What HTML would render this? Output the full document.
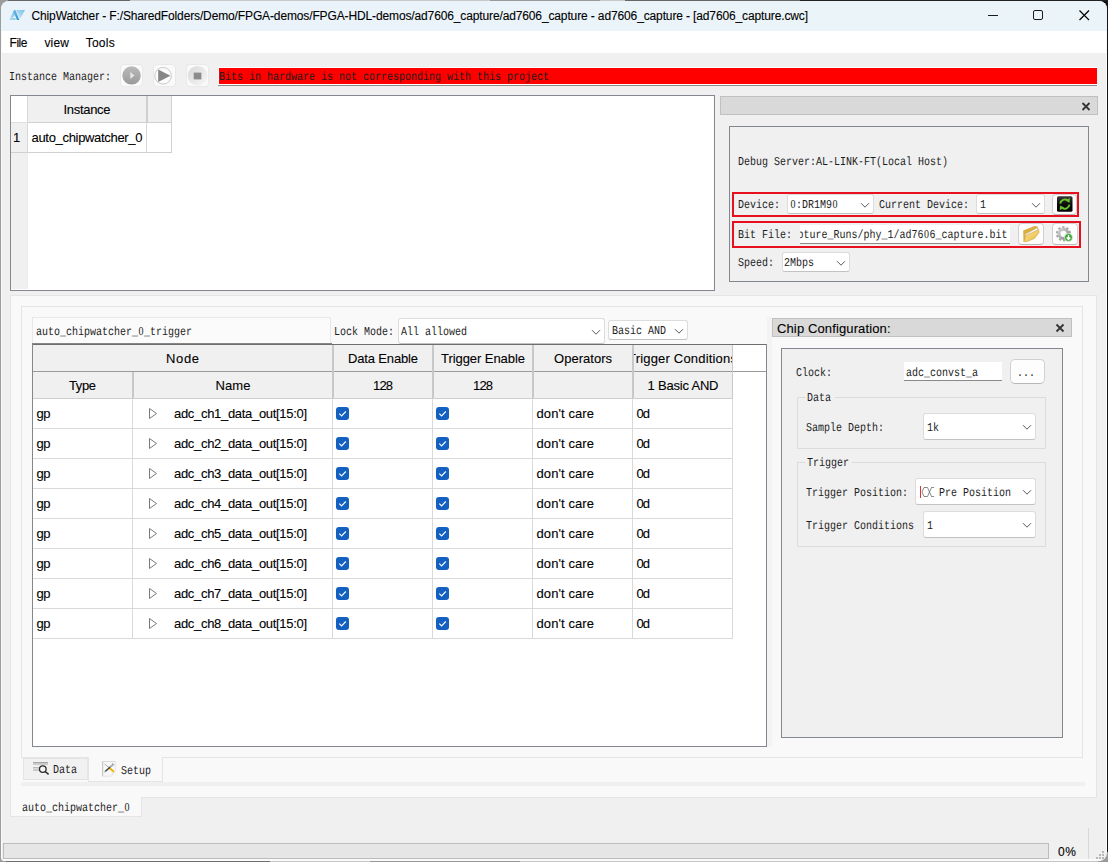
<!DOCTYPE html>
<html lang="en"><head><meta charset="utf-8"><title>ChipWatcher</title><style>
html,body{margin:0;padding:0}
body{width:1108px;height:862px;overflow:hidden;position:relative;background:#f0f0f0;color:#000}
body div,body span,body svg{position:absolute}
.m{font:12px/14px "Liberation Mono",monospace;white-space:pre;transform:scaleX(.83333);transform-origin:0 0;text-rendering:geometricPrecision;color:#1c1c1c}
.m span{position:static}
.m i{font:normal 12px/10px "Liberation Serif",serif;display:inline-block;width:7.2px;text-align:center;text-indent:0}
.s12{font:12px/14px "Liberation Sans",sans-serif;white-space:pre;color:#000;-webkit-text-stroke:.1px #000}
.s13{font:13px/16px "Liberation Sans",sans-serif;white-space:pre;color:#000;-webkit-text-stroke:.1px #000}
</style></head>
<body>
<div style="left:0px;top:0px;width:1108px;height:862px;background:#9c9c9c;"></div>
<div style="left:1098px;top:0px;width:10px;height:12px;background:#111;"></div>
<div style="left:1107px;top:0px;width:1px;height:852px;background:#151515;"></div>
<div style="left:0px;top:0px;width:1108px;height:1px;background:linear-gradient(90deg,#9a9a9a 0 8px,#666 8px 130px,#c8c8c8 130px 490px,#999 490px 600px,#c8c8c8 600px 625px,#666 625px 800px,#222 800px);"></div>
<div style="left:0px;top:861px;width:1108px;height:1px;background:linear-gradient(90deg,#999 0 6px,#707070 6px 270px,#c6c6c6 270px 370px,#9a9a9a 370px 520px,#c6c6c6 520px 1098px,#999 1098px);"></div>
<div style="left:1px;top:1px;width:1106px;height:860px;background:#f0f0f0;border-radius:8px 8px 8px 3px;"></div>
<div style="left:1px;top:1px;width:1106px;height:30px;border-radius:8px 8px 0 0;background:linear-gradient(90deg,#eaf3fa,#ebf4f8);"></div>
<div style="left:1px;top:31px;width:1106px;height:22px;background:#fff;"></div>
<svg style="left:8px;top:9px" width="18" height="12" viewBox="0 0 18 12"><defs><linearGradient id="ia" x1="0" y1="1" x2="1" y2="0"><stop offset="0" stop-color="#b9def4"/><stop offset="1" stop-color="#6db7e6"/></linearGradient><linearGradient id="ib" x1="0" y1="0" x2="0" y2="1"><stop offset="0" stop-color="#6db7e6"/><stop offset="1" stop-color="#2c97d5"/></linearGradient><linearGradient id="ic" x1="0" y1="1" x2="1" y2="0"><stop offset="0" stop-color="#d3eaf7"/><stop offset="1" stop-color="#77c0ea"/></linearGradient></defs><path d="M1.3 11.1 L6 .9 L6.9 .9 L6.4 6.9 L4.1 9.1 L7.2 9.1 L7.9 11.1 Z" fill="url(#ia)"/><path d="M6 .9 L7.4 .9 L11.3 11.1 L9 11.1 L5.6 3 Z" fill="url(#ib)"/><path d="M8 .9 L17 .9 L12.3 9.6 L11.5 9.6 Z" fill="url(#ic)"/></svg>
<span class="s12" style="left:31.50px;top:9px;letter-spacing:-0.129px;">ChipWatcher - F:/SharedFolders/Demo/FPGA-demos/FPGA-HDL-demos/ad7606_capture/ad7606_capture - ad7606_capture - [ad7606_capture.cwc]</span>
<svg style="left:980px;top:5px" width="120" height="22" viewBox="0 0 120 22"><g fill="none" stroke="#1a1a1a" stroke-width="1"><path d="M8 10.5 H18"/><rect x="53.5" y="5.5" width="9" height="9" rx="1.5"/><path d="M99.5 5.5 L109 15 M109 5.5 L99.5 15" stroke-width="1.15" stroke="#000"/></g></svg>
<span class="s12" style="left:9.50px;top:36px;letter-spacing:-0.445px;">File</span>
<span class="s12" style="left:44.40px;top:36px;letter-spacing:0.165px;">view</span>
<span class="s12" style="left:85.70px;top:36px;letter-spacing:0.247px;">Tools</span>
<span class="m" style="left:9px;top:70px;">Instance Manager:</span>
<div style="left:120px;top:64px;width:23px;height:23px;background:#fafafa;border:1px solid #e9e9e9;border-radius:4px;box-sizing:border-box;"></div>
<div style="left:153px;top:64px;width:23px;height:23px;background:#fafafa;border:1px solid #e9e9e9;border-radius:4px;box-sizing:border-box;"></div>
<div style="left:186px;top:64px;width:23px;height:23px;background:#fafafa;border:1px solid #e9e9e9;border-radius:4px;box-sizing:border-box;"></div>
<svg style="left:120.5px;top:64.7px" width="21" height="21" viewBox="0 0 21 21"><defs><linearGradient id="g1" x1="0" y1="0" x2="0" y2="1"><stop offset="0" stop-color="#bababa"/><stop offset="1" stop-color="#9a9a9a"/></linearGradient></defs><circle cx="10.55" cy="10.4" r="9.2" fill="url(#g1)"/><path d="M9.3 7 L13.5 10.55 L9.3 14.1 Z" fill="#e6e6e6"/></svg>
<svg style="left:153px;top:65.2px" width="21" height="21" viewBox="0 0 21 21"><circle cx="10.05" cy="10.8" r="8.3" fill="#fbfbfb" stroke="#a8a8a8" stroke-width=".6"/><path d="M5.2 4.5 L17.4 10.8 L5.2 16.9 Z" fill="#868686"/></svg>
<svg style="left:186.5px;top:65px" width="21" height="21" viewBox="0 0 21 21"><defs><linearGradient id="g3" x1="0" y1="0" x2="1" y2="1"><stop offset="0" stop-color="#d8d8d8"/><stop offset="1" stop-color="#f8f8f8"/></linearGradient></defs><circle cx="10.6" cy="10.8" r="9.9" fill="url(#g3)"/><rect x="6.7" y="7.6" width="7.7" height="6.8" fill="#8c8c8c"/></svg>
<div style="left:218px;top:67px;width:879px;height:19px;background:#fff;"></div>
<div style="left:219px;top:68px;width:878px;height:16px;background:#fe0000;"></div>
<div style="left:218px;top:85px;width:879px;height:1px;background:#8a8a8a;"></div>
<span class="m" style="left:219px;top:70px;">Bits in hardware is not corresponding with this project</span>
<div style="left:10px;top:95px;width:705px;height:196px;background:#fff;border:1px solid #828790;box-sizing:border-box;"></div>
<div style="left:11px;top:123px;width:17px;height:166px;background:#f0f0f0;"></div>
<div style="left:28px;top:96px;width:144px;height:27px;background:#f0f0f0;"></div>
<div style="left:27px;top:96px;width:1px;height:27px;background:#d8d8d8;"></div>
<div style="left:146px;top:96px;width:2px;height:27px;background:#d0d0d0;"></div>
<div style="left:171px;top:96px;width:1px;height:57px;background:#d0d0d0;"></div>
<div style="left:28px;top:122px;width:144px;height:1px;background:#d0d0d0;"></div>
<div style="left:11px;top:152px;width:161px;height:1px;background:#d0d0d0;"></div>
<div style="left:146px;top:123px;width:1px;height:30px;background:#d8d8d8;"></div>
<div style="left:27px;top:123px;width:1px;height:30px;background:#d8d8d8;"></div>
<div style="left:27px;top:153px;width:1px;height:136px;background:#ececec;"></div>
<div style="left:11px;top:122px;width:17px;height:1px;background:#e0e0e0;"></div>
<span class="s13" style="left:63.50px;top:102px;letter-spacing:-0.306px;">Instance</span>
<span class="s13" style="left:13.00px;top:130px;">1</span>
<span class="s13" style="left:31.50px;top:130px;letter-spacing:-0.315px;">auto_chipwatcher_0</span>
<div style="left:720px;top:96px;width:378px;height:19px;background:#d9d9d9;border:1px solid #c0c0c0;box-sizing:border-box;"></div>
<svg style="left:1081px;top:102px" width="10" height="9" viewBox="0 0 10 9"><path d="M1.5 1 L8.5 8 M8.5 1 L1.5 8" stroke="#333" stroke-width="1.8" fill="none"/></svg>
<div style="left:729px;top:126px;width:360px;height:156px;border:1px solid #828790;box-sizing:border-box;"></div>
<span class="m" style="left:738px;top:155px;">Debug Server:AL-LINK-FT(Local Host)</span>
<div style="left:732px;top:192px;width:347px;height:25px;border:2px solid #e8101e;box-sizing:border-box;"></div>
<div style="left:732px;top:221px;width:349px;height:27px;border:2px solid #e8101e;box-sizing:border-box;"></div>
<span class="m" style="left:738px;top:198px;">Device:</span>
<div style="left:787px;top:194px;width:87px;height:20px;background:#fff;border:1px solid #dcdcdc;border-radius:3px;box-sizing:border-box;border-bottom-color:#c2c2c2;"></div>
<svg style="left:860px;top:202px" width="10" height="7" viewBox="0 0 10 7"><path d="M1 1.2 L5 5.2 L9 1.2" fill="none" stroke="#5a5a5a" stroke-width="1"/></svg>
<span class="m" style="left:790px;top:198px;"><i>0</i>:DR1M9<i>0</i></span>
<span class="m" style="left:879px;top:198px;">Current Device:</span>
<div style="left:976px;top:194px;width:69px;height:20px;background:#fff;border:1px solid #dcdcdc;border-radius:3px;box-sizing:border-box;border-bottom-color:#c2c2c2;"></div>
<svg style="left:1031px;top:202px" width="10" height="7" viewBox="0 0 10 7"><path d="M1 1.2 L5 5.2 L9 1.2" fill="none" stroke="#5a5a5a" stroke-width="1"/></svg>
<span class="m" style="left:980px;top:198px;">1</span>
<div style="left:1052px;top:194px;width:25px;height:21px;background:#fdfdfd;border:1px solid #d0d0d0;border-radius:4px;box-sizing:border-box;border-bottom-color:#b8b8b8;"></div>
<svg style="left:1056px;top:196px" width="17" height="17" viewBox="0 0 17 17"><defs><linearGradient id="rk" x1="0" y1="0" x2="0" y2="1"><stop offset="0" stop-color="#3a3a3a"/><stop offset=".5" stop-color="#0c0c0c"/><stop offset="1" stop-color="#000"/></linearGradient></defs><rect x="1" y=".3" width="15.5" height="15.5" rx="1.5" fill="url(#rk)"/><g fill="none" stroke="#66c22e" stroke-width="1.9"><path d="M4.2 7.6 A4.7 4.7 0 0 1 11.6 4.3"/><path d="M13.4 8.6 A4.7 4.7 0 0 1 6 11.9"/></g><path d="M13.9 1.9 L13.5 6.7 L9.4 4.6 Z M3.7 14.3 L4.1 9.5 L8.2 11.6 Z" fill="#66c22e"/></svg>
<span class="m" style="left:738px;top:228px;">Bit File:</span>
<div style="left:800px;top:225px;width:210px;height:19px;background:#fff;box-sizing:border-box;border-bottom:1px solid #8a8a8a;"></div>
<span class="m" style="left:800px;top:228px;"><span style="display:inline-block;width:252px;overflow:hidden;text-indent:-3.6px;vertical-align:top">pture_Runs/phy_1/ad76<i>0</i>6_capture.bit</span></span>
<div style="left:1018px;top:223px;width:26px;height:22px;background:#fdfdfd;border:1px solid #d0d0d0;border-radius:4px;box-sizing:border-box;border-bottom-color:#b8b8b8;"></div>
<div style="left:1052px;top:223px;width:26px;height:22px;background:#fdfdfd;border:1px solid #d0d0d0;border-radius:4px;box-sizing:border-box;border-bottom-color:#b8b8b8;"></div>
<svg style="left:1022px;top:225px" width="19" height="18" viewBox="0 0 19 18"><defs><linearGradient id="fo" x1="0" y1="0" x2="1" y2="1"><stop offset="0" stop-color="#fce795"/><stop offset="1" stop-color="#e6b845"/></linearGradient></defs><path d="M1.2 5.5 L12.5 1 L15.5 1.5 L16.5 4 L4 9 L3 16 L1.5 16.5 Z" fill="#dcae3e"/><path d="M3.5 9.5 L15 3 L16.2 4.8 L4.5 12.5 Z" fill="#fafafa" stroke="#c4c4c4" stroke-width=".5"/><path d="M1.7 16.7 L4 10.5 L16.8 4.5 L17 7.5 L12.5 13.5 L5 16.5 Z" fill="url(#fo)" stroke="#c99a30" stroke-width=".5"/></svg>
<svg style="left:1055px;top:225px" width="19" height="18" viewBox="0 0 19 18"><defs><linearGradient id="ge" x1="0" y1="0" x2="1" y2="1"><stop offset="0" stop-color="#d2d2d2"/><stop offset="1" stop-color="#8c8c8c"/></linearGradient></defs><circle cx="8.5" cy="8.8" r="6.3" fill="none" stroke="#a6a6a6" stroke-width="2.6" stroke-dasharray="2.2 1.76"/><circle cx="8.5" cy="8.8" r="4.6" fill="none" stroke="url(#ge)" stroke-width="3"/><circle cx="13.5" cy="12.5" r="4" fill="#35a32f" stroke="#f2f8f1" stroke-width=".7"/><path d="M13.5 10.1 V14.3 M11.6 12.6 L13.5 14.6 L15.4 12.6" stroke="#fff" stroke-width="1.4" fill="none"/></svg>
<span class="m" style="left:738px;top:256px;">Speed:</span>
<div style="left:782px;top:252px;width:68px;height:20px;background:#fff;border:1px solid #dcdcdc;border-radius:3px;box-sizing:border-box;border-bottom-color:#c2c2c2;"></div>
<svg style="left:836px;top:260px" width="10" height="7" viewBox="0 0 10 7"><path d="M1 1.2 L5 5.2 L9 1.2" fill="none" stroke="#5a5a5a" stroke-width="1"/></svg>
<span class="m" style="left:784px;top:256px;">2Mbps</span>
<div style="left:10px;top:295px;width:1087px;height:503px;background:#f9f9f9;border:1px solid #e5e5e5;box-sizing:border-box;"></div>
<div style="left:21px;top:306px;width:1062px;height:452px;background:#f9f9f9;border:1px solid #e5e5e5;box-sizing:border-box;"></div>
<div style="left:21px;top:782px;width:1064px;height:4px;background:#f0f0f0;"></div>
<div style="left:23px;top:758px;width:65px;height:22px;background:#f1f1f1;border:1px solid #e5e5e5;box-sizing:border-box;"></div>
<div style="left:88px;top:757px;width:75px;height:25px;background:#f9f9f9;border:1px solid #e5e5e5;box-sizing:border-box;border-top:none;"></div>
<span class="m" style="left:53px;top:763px;">Data</span>
<span class="m" style="left:121px;top:764px;">Setup</span>
<svg style="left:32px;top:761px" width="18" height="15" viewBox="0 0 18 15"><g stroke="#a4a4a4" stroke-width="1"><path d="M1 1.5 H16 M1 3 H16 M1 6.8 H9 M1 9 H8"/></g><circle cx="10.8" cy="8.1" r="3.3" fill="#f6f6f6" stroke="#2a2a2a" stroke-width="1.3"/><path d="M13.2 10.5 L16.6 13.3" stroke="#2a2a2a" stroke-width="1.5"/></svg>
<svg style="left:102px;top:761px" width="15" height="16" viewBox="0 0 15 16"><path d="M.3 .2 H13.6 V11 L9 15.4 H.3 Z" fill="#f7f7f7"/><path d="M.7 .4 V15.3" stroke="#bdbdbd" stroke-width="1"/><path d="M.4 .5 H13.4" stroke="#d4d4d4" stroke-width=".8"/><path d="M13.3 .5 V11 M.5 15.2 H9" stroke="#e0e0e0" stroke-width=".7" fill="none"/><path d="M9 15.4 L13.6 10.9 L10 11.5 Z" fill="#e6e6e6"/><path d="M2.5 3 L7 6.6" stroke="#9c9c9c" stroke-width=".8"/><path d="M7.7 7.2 L11.3 10.3" stroke="#e6b800" stroke-width="1.9" stroke-linecap="round"/><path d="M8.2 5.9 L3.2 10.4" stroke="#3a3a3a" stroke-width="1.4"/><path d="M3.2 10.4 L2.4 11.3" stroke="#b8b8b8" stroke-width="1.3"/><path d="M8 6 L11.4 3.3" stroke="#a6a6a6" stroke-width="1.6"/><path d="M10.4 2 L10.8 3.6 L12.4 3.9" stroke="#a6a6a6" stroke-width=".9" fill="none"/></svg>
<div style="left:10px;top:797px;width:132px;height:20px;background:#f9f9f9;border:1px solid #e5e5e5;box-sizing:border-box;border-top:none;"></div>
<span class="m" style="left:22px;top:801px;">auto_chipwatcher_<i>0</i></span>
<div style="left:32px;top:317px;width:299px;height:27px;background:#fbfbfb;border:1px solid #e8e8e8;box-sizing:border-box;border-bottom:none;"></div>
<span class="m" style="left:36px;top:325px;">auto_chipwatcher_<i>0</i>_trigger</span>
<div style="left:32px;top:343px;width:300px;height:1px;background:#868686;"></div>
<span class="m" style="left:334px;top:325px;">Lock Mode:</span>
<div style="left:398px;top:318px;width:207px;height:26px;background:#fff;border:1px solid #dcdcdc;border-radius:3px;box-sizing:border-box;border-bottom-color:#c2c2c2;"></div>
<svg style="left:591px;top:329px" width="10" height="7" viewBox="0 0 10 7"><path d="M1 1.2 L5 5.2 L9 1.2" fill="none" stroke="#5a5a5a" stroke-width="1"/></svg>
<span class="m" style="left:401px;top:325px;">All allowed</span>
<div style="left:608px;top:320px;width:80px;height:20px;background:#fff;border:1px solid #dcdcdc;border-radius:3px;box-sizing:border-box;border-bottom-color:#c2c2c2;"></div>
<svg style="left:674px;top:328px" width="10" height="7" viewBox="0 0 10 7"><path d="M1 1.2 L5 5.2 L9 1.2" fill="none" stroke="#5a5a5a" stroke-width="1"/></svg>
<span class="m" style="left:612px;top:324px;">Basic AND</span>
<div style="left:32px;top:344px;width:735px;height:403px;background:#fff;border:1px solid #828790;box-sizing:border-box;"></div>
<div style="left:33px;top:345px;width:700px;height:53px;background:#f0f0f0;"></div>
<div style="left:33px;top:344px;width:733px;height:1px;background:#6e6e6e;"></div>
<div style="left:33px;top:371px;width:733px;height:1px;background:#9a9a9a;"></div>
<div style="left:33px;top:398px;width:700px;height:1px;background:#cfcfcf;"></div>
<div style="left:332px;top:345px;width:2px;height:53px;background:#c8c8c8;"></div>
<div style="left:432px;top:345px;width:2px;height:53px;background:#c8c8c8;"></div>
<div style="left:532px;top:345px;width:2px;height:53px;background:#c8c8c8;"></div>
<div style="left:632px;top:345px;width:2px;height:53px;background:#c8c8c8;"></div>
<div style="left:732px;top:345px;width:1px;height:53px;background:#c8c8c8;"></div>
<div style="left:132px;top:372px;width:2px;height:26px;background:#c8c8c8;"></div>
<div style="left:33px;top:428px;width:700px;height:1px;background:#d9d9d9;"></div>
<div style="left:33px;top:458px;width:700px;height:1px;background:#d9d9d9;"></div>
<div style="left:33px;top:488px;width:700px;height:1px;background:#d9d9d9;"></div>
<div style="left:33px;top:518px;width:700px;height:1px;background:#d9d9d9;"></div>
<div style="left:33px;top:548px;width:700px;height:1px;background:#d9d9d9;"></div>
<div style="left:33px;top:578px;width:700px;height:1px;background:#d9d9d9;"></div>
<div style="left:33px;top:608px;width:700px;height:1px;background:#d9d9d9;"></div>
<div style="left:33px;top:638px;width:700px;height:1px;background:#d9d9d9;"></div>
<div style="left:132px;top:399px;width:1px;height:240px;background:#d9d9d9;"></div>
<div style="left:332px;top:399px;width:1px;height:240px;background:#d9d9d9;"></div>
<div style="left:432px;top:399px;width:1px;height:240px;background:#d9d9d9;"></div>
<div style="left:532px;top:399px;width:1px;height:240px;background:#d9d9d9;"></div>
<div style="left:632px;top:399px;width:1px;height:240px;background:#d9d9d9;"></div>
<div style="left:732px;top:399px;width:1px;height:240px;background:#d9d9d9;"></div>
<span class="s13" style="left:166.00px;top:351px;letter-spacing:0.641px;">Node</span>
<span class="s13" style="left:348.00px;top:351px;letter-spacing:-0.155px;">Data Enable</span>
<span class="s13" style="left:441.00px;top:351px;letter-spacing:-0.060px;">Trigger Enable</span>
<span class="s13" style="left:554.00px;top:351px;letter-spacing:0.025px;">Operators</span>
<div style="left:634px;top:345px;width:98px;height:26px;overflow:hidden"><span class="s13" style="left:-6px;top:6px;letter-spacing:.19px">Trigger Conditions</span></div>
<span class="s13" style="left:69.00px;top:378px;letter-spacing:-0.394px;">Type</span>
<span class="s13" style="left:215.50px;top:378px;letter-spacing:0.108px;">Name</span>
<span class="s13" style="left:373.00px;top:378px;letter-spacing:-0.845px;">128</span>
<span class="s13" style="left:473.00px;top:378px;letter-spacing:-0.845px;">128</span>
<span class="s13" style="left:647.50px;top:378px;letter-spacing:-0.197px;">1 Basic AND</span>
<span class="s13" style="left:36.50px;top:406px;letter-spacing:-0.459px;">gp</span>
<svg style="left:148px;top:407px" width="10" height="13" viewBox="0 0 10 13"><path d="M1.5 1.5 L8.5 6.5 L1.5 11.5 Z" fill="none" stroke="#7a7a7a" stroke-width="1"/></svg>
<span class="s13" style="left:174.00px;top:406px;letter-spacing:-0.310px;">adc_ch1_data_out[15:0]</span>
<svg style="left:336px;top:407px" width="13" height="13" viewBox="0 0 13 13"><rect width="13" height="13" rx="3" fill="#1360c0"/><path d="M3.3 6.6 L5.6 8.9 L9.8 4.5" fill="none" stroke="#fff" stroke-width="1.1"/></svg>
<svg style="left:436px;top:407px" width="13" height="13" viewBox="0 0 13 13"><rect width="13" height="13" rx="3" fill="#1360c0"/><path d="M3.3 6.6 L5.6 8.9 L9.8 4.5" fill="none" stroke="#fff" stroke-width="1.1"/></svg>
<span class="s13" style="left:536.50px;top:406px;letter-spacing:0.091px;">don't care</span>
<span class="s13" style="left:636.50px;top:406px;letter-spacing:-0.859px;">0d</span>
<span class="s13" style="left:36.50px;top:436px;letter-spacing:-0.459px;">gp</span>
<svg style="left:148px;top:437px" width="10" height="13" viewBox="0 0 10 13"><path d="M1.5 1.5 L8.5 6.5 L1.5 11.5 Z" fill="none" stroke="#7a7a7a" stroke-width="1"/></svg>
<span class="s13" style="left:174.00px;top:436px;letter-spacing:-0.310px;">adc_ch2_data_out[15:0]</span>
<svg style="left:336px;top:437px" width="13" height="13" viewBox="0 0 13 13"><rect width="13" height="13" rx="3" fill="#1360c0"/><path d="M3.3 6.6 L5.6 8.9 L9.8 4.5" fill="none" stroke="#fff" stroke-width="1.1"/></svg>
<svg style="left:436px;top:437px" width="13" height="13" viewBox="0 0 13 13"><rect width="13" height="13" rx="3" fill="#1360c0"/><path d="M3.3 6.6 L5.6 8.9 L9.8 4.5" fill="none" stroke="#fff" stroke-width="1.1"/></svg>
<span class="s13" style="left:536.50px;top:436px;letter-spacing:0.091px;">don't care</span>
<span class="s13" style="left:636.50px;top:436px;letter-spacing:-0.859px;">0d</span>
<span class="s13" style="left:36.50px;top:466px;letter-spacing:-0.459px;">gp</span>
<svg style="left:148px;top:467px" width="10" height="13" viewBox="0 0 10 13"><path d="M1.5 1.5 L8.5 6.5 L1.5 11.5 Z" fill="none" stroke="#7a7a7a" stroke-width="1"/></svg>
<span class="s13" style="left:174.00px;top:466px;letter-spacing:-0.310px;">adc_ch3_data_out[15:0]</span>
<svg style="left:336px;top:467px" width="13" height="13" viewBox="0 0 13 13"><rect width="13" height="13" rx="3" fill="#1360c0"/><path d="M3.3 6.6 L5.6 8.9 L9.8 4.5" fill="none" stroke="#fff" stroke-width="1.1"/></svg>
<svg style="left:436px;top:467px" width="13" height="13" viewBox="0 0 13 13"><rect width="13" height="13" rx="3" fill="#1360c0"/><path d="M3.3 6.6 L5.6 8.9 L9.8 4.5" fill="none" stroke="#fff" stroke-width="1.1"/></svg>
<span class="s13" style="left:536.50px;top:466px;letter-spacing:0.091px;">don't care</span>
<span class="s13" style="left:636.50px;top:466px;letter-spacing:-0.859px;">0d</span>
<span class="s13" style="left:36.50px;top:496px;letter-spacing:-0.459px;">gp</span>
<svg style="left:148px;top:497px" width="10" height="13" viewBox="0 0 10 13"><path d="M1.5 1.5 L8.5 6.5 L1.5 11.5 Z" fill="none" stroke="#7a7a7a" stroke-width="1"/></svg>
<span class="s13" style="left:174.00px;top:496px;letter-spacing:-0.310px;">adc_ch4_data_out[15:0]</span>
<svg style="left:336px;top:497px" width="13" height="13" viewBox="0 0 13 13"><rect width="13" height="13" rx="3" fill="#1360c0"/><path d="M3.3 6.6 L5.6 8.9 L9.8 4.5" fill="none" stroke="#fff" stroke-width="1.1"/></svg>
<svg style="left:436px;top:497px" width="13" height="13" viewBox="0 0 13 13"><rect width="13" height="13" rx="3" fill="#1360c0"/><path d="M3.3 6.6 L5.6 8.9 L9.8 4.5" fill="none" stroke="#fff" stroke-width="1.1"/></svg>
<span class="s13" style="left:536.50px;top:496px;letter-spacing:0.091px;">don't care</span>
<span class="s13" style="left:636.50px;top:496px;letter-spacing:-0.859px;">0d</span>
<span class="s13" style="left:36.50px;top:526px;letter-spacing:-0.459px;">gp</span>
<svg style="left:148px;top:527px" width="10" height="13" viewBox="0 0 10 13"><path d="M1.5 1.5 L8.5 6.5 L1.5 11.5 Z" fill="none" stroke="#7a7a7a" stroke-width="1"/></svg>
<span class="s13" style="left:174.00px;top:526px;letter-spacing:-0.310px;">adc_ch5_data_out[15:0]</span>
<svg style="left:336px;top:527px" width="13" height="13" viewBox="0 0 13 13"><rect width="13" height="13" rx="3" fill="#1360c0"/><path d="M3.3 6.6 L5.6 8.9 L9.8 4.5" fill="none" stroke="#fff" stroke-width="1.1"/></svg>
<svg style="left:436px;top:527px" width="13" height="13" viewBox="0 0 13 13"><rect width="13" height="13" rx="3" fill="#1360c0"/><path d="M3.3 6.6 L5.6 8.9 L9.8 4.5" fill="none" stroke="#fff" stroke-width="1.1"/></svg>
<span class="s13" style="left:536.50px;top:526px;letter-spacing:0.091px;">don't care</span>
<span class="s13" style="left:636.50px;top:526px;letter-spacing:-0.859px;">0d</span>
<span class="s13" style="left:36.50px;top:556px;letter-spacing:-0.459px;">gp</span>
<svg style="left:148px;top:557px" width="10" height="13" viewBox="0 0 10 13"><path d="M1.5 1.5 L8.5 6.5 L1.5 11.5 Z" fill="none" stroke="#7a7a7a" stroke-width="1"/></svg>
<span class="s13" style="left:174.00px;top:556px;letter-spacing:-0.310px;">adc_ch6_data_out[15:0]</span>
<svg style="left:336px;top:557px" width="13" height="13" viewBox="0 0 13 13"><rect width="13" height="13" rx="3" fill="#1360c0"/><path d="M3.3 6.6 L5.6 8.9 L9.8 4.5" fill="none" stroke="#fff" stroke-width="1.1"/></svg>
<svg style="left:436px;top:557px" width="13" height="13" viewBox="0 0 13 13"><rect width="13" height="13" rx="3" fill="#1360c0"/><path d="M3.3 6.6 L5.6 8.9 L9.8 4.5" fill="none" stroke="#fff" stroke-width="1.1"/></svg>
<span class="s13" style="left:536.50px;top:556px;letter-spacing:0.091px;">don't care</span>
<span class="s13" style="left:636.50px;top:556px;letter-spacing:-0.859px;">0d</span>
<span class="s13" style="left:36.50px;top:586px;letter-spacing:-0.459px;">gp</span>
<svg style="left:148px;top:587px" width="10" height="13" viewBox="0 0 10 13"><path d="M1.5 1.5 L8.5 6.5 L1.5 11.5 Z" fill="none" stroke="#7a7a7a" stroke-width="1"/></svg>
<span class="s13" style="left:174.00px;top:586px;letter-spacing:-0.310px;">adc_ch7_data_out[15:0]</span>
<svg style="left:336px;top:587px" width="13" height="13" viewBox="0 0 13 13"><rect width="13" height="13" rx="3" fill="#1360c0"/><path d="M3.3 6.6 L5.6 8.9 L9.8 4.5" fill="none" stroke="#fff" stroke-width="1.1"/></svg>
<svg style="left:436px;top:587px" width="13" height="13" viewBox="0 0 13 13"><rect width="13" height="13" rx="3" fill="#1360c0"/><path d="M3.3 6.6 L5.6 8.9 L9.8 4.5" fill="none" stroke="#fff" stroke-width="1.1"/></svg>
<span class="s13" style="left:536.50px;top:586px;letter-spacing:0.091px;">don't care</span>
<span class="s13" style="left:636.50px;top:586px;letter-spacing:-0.859px;">0d</span>
<span class="s13" style="left:36.50px;top:616px;letter-spacing:-0.459px;">gp</span>
<svg style="left:148px;top:617px" width="10" height="13" viewBox="0 0 10 13"><path d="M1.5 1.5 L8.5 6.5 L1.5 11.5 Z" fill="none" stroke="#7a7a7a" stroke-width="1"/></svg>
<span class="s13" style="left:174.00px;top:616px;letter-spacing:-0.310px;">adc_ch8_data_out[15:0]</span>
<svg style="left:336px;top:617px" width="13" height="13" viewBox="0 0 13 13"><rect width="13" height="13" rx="3" fill="#1360c0"/><path d="M3.3 6.6 L5.6 8.9 L9.8 4.5" fill="none" stroke="#fff" stroke-width="1.1"/></svg>
<svg style="left:436px;top:617px" width="13" height="13" viewBox="0 0 13 13"><rect width="13" height="13" rx="3" fill="#1360c0"/><path d="M3.3 6.6 L5.6 8.9 L9.8 4.5" fill="none" stroke="#fff" stroke-width="1.1"/></svg>
<span class="s13" style="left:536.50px;top:616px;letter-spacing:0.091px;">don't care</span>
<span class="s13" style="left:636.50px;top:616px;letter-spacing:-0.859px;">0d</span>
<div style="left:767px;top:317px;width:5px;height:430px;background:#f3f3f3;"></div>
<div style="left:772px;top:318px;width:300px;height:19px;background:#d9d9d9;border:1px solid #c0c0c0;box-sizing:border-box;"></div>
<span class="s13" style="left:777.00px;top:321px;letter-spacing:0.123px;">Chip Configuration:</span>
<svg style="left:1055px;top:323px" width="10" height="10" viewBox="0 0 10 10"><path d="M1.5 1.5 L8.5 8.5 M8.5 1.5 L1.5 8.5" stroke="#333" stroke-width="1.8" fill="none"/></svg>
<div style="left:781px;top:348px;width:282px;height:390px;background:#f0f0f0;border:1px solid #828790;box-sizing:border-box;"></div>
<span class="m" style="left:796px;top:366px;">Clock:</span>
<div style="left:904px;top:362px;width:98px;height:19px;background:#fff;box-sizing:border-box;border-bottom:1px solid #8a8a8a;"></div>
<span class="m" style="left:906px;top:366px;">adc_convst_a</span>
<div style="left:1010px;top:359px;width:35px;height:25px;background:#fdfdfd;border:1px solid #d0d0d0;border-radius:5px;box-sizing:border-box;border-bottom-color:#b8b8b8;"></div>
<span class="m" style="left:1017px;top:366px;color:#222;">...</span>
<div style="left:797px;top:397px;width:249px;height:52px;border:1px solid #dcdcdc;box-sizing:border-box;"></div>
<div style="left:805px;top:392px;width:30px;height:12px;background:#f0f0f0;"></div>
<span class="m" style="left:807px;top:391px;">Data</span>
<span class="m" style="left:806px;top:421px;">Sample Depth:</span>
<div style="left:923px;top:413px;width:113px;height:27px;background:#fff;border:1px solid #dcdcdc;border-radius:3px;box-sizing:border-box;border-bottom-color:#c2c2c2;"></div>
<svg style="left:1022px;top:424px" width="10" height="7" viewBox="0 0 10 7"><path d="M1 1.2 L5 5.2 L9 1.2" fill="none" stroke="#5a5a5a" stroke-width="1"/></svg>
<span class="m" style="left:927px;top:421px;">1k</span>
<div style="left:797px;top:462px;width:249px;height:85px;border:1px solid #dcdcdc;box-sizing:border-box;"></div>
<div style="left:805px;top:457px;width:47px;height:12px;background:#f0f0f0;"></div>
<span class="m" style="left:807px;top:456px;">Trigger</span>
<span class="m" style="left:806px;top:486px;">Trigger Position:</span>
<div style="left:915px;top:478px;width:121px;height:27px;background:#fff;border:1px solid #dcdcdc;border-radius:3px;box-sizing:border-box;border-bottom-color:#c2c2c2;"></div>
<svg style="left:1022px;top:489px" width="10" height="7" viewBox="0 0 10 7"><path d="M1 1.2 L5 5.2 L9 1.2" fill="none" stroke="#5a5a5a" stroke-width="1"/></svg>
<span class="m" style="left:939px;top:486px;">Pre Position</span>
<svg style="left:919px;top:485px" width="17" height="14" viewBox="0 0 17 14"><path d="M1.5 1 V13" stroke="#e03030" stroke-width="1"/><path d="M3 7 L5 2.5 H8.5 L10.5 7 L8.5 11.5 H5 Z M10.5 7 L12.5 2.5 H15 M10.5 7 L12.5 11.5 H15" fill="none" stroke="#6a6a6a" stroke-width=".8"/></svg>
<span class="m" style="left:806px;top:519px;">Trigger Conditions</span>
<div style="left:923px;top:511px;width:113px;height:27px;background:#fff;border:1px solid #dcdcdc;border-radius:3px;box-sizing:border-box;border-bottom-color:#c2c2c2;"></div>
<svg style="left:1022px;top:522px" width="10" height="7" viewBox="0 0 10 7"><path d="M1 1.2 L5 5.2 L9 1.2" fill="none" stroke="#5a5a5a" stroke-width="1"/></svg>
<span class="m" style="left:927px;top:519px;">1</span>
<div style="left:3px;top:843px;width:1046px;height:16px;background:#e6e6e6;border:1px solid #bcbcbc;box-sizing:border-box;"></div>
<span class="s12" style="left:1058.00px;top:845px;letter-spacing:0.656px;">0%</span>
<div style="left:1088px;top:828px;width:1px;height:31px;background:#d8d8d8;"></div>
<div style="left:1102px;top:851px;width:2px;height:2px;background:#b8b8b8;"></div>
<div style="left:1099px;top:854px;width:2px;height:2px;background:#b8b8b8;"></div>
<div style="left:1102px;top:854px;width:2px;height:2px;background:#b8b8b8;"></div>
<div style="left:1096px;top:857px;width:2px;height:2px;background:#b8b8b8;"></div>
<div style="left:1099px;top:857px;width:2px;height:2px;background:#b8b8b8;"></div>
<div style="left:1102px;top:857px;width:2px;height:2px;background:#b8b8b8;"></div>
<div style="left:1px;top:31px;width:1px;height:827px;background:#fafafa;"></div>
<div style="left:1106px;top:31px;width:1px;height:822px;background:#fafafa;"></div>
<div style="left:3px;top:859px;width:1098px;height:2px;background:#fafafa;"></div>
</body></html>
